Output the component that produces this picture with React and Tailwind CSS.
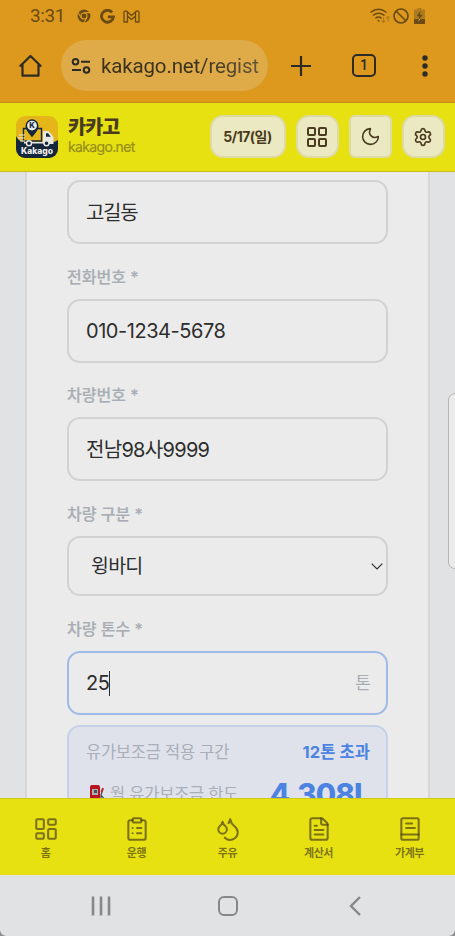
import { ClipboardList, Droplets, FileText, LayoutDashboard, LayoutGrid, Moon, Settings } from 'lucide-react'

const FIELDS = [
  { label: '전화번호 *', value: '010-1234-5678' },
  { label: '차량번호 *', value: '전남98사9999' },
]

const TABS = [
  { label: '홈', icon: LayoutDashboard },
  { label: '운행', icon: ClipboardList },
  { label: '주유', icon: Droplets },
  { label: '계산서', icon: FileText },
  { label: '가계부', icon: LedgerIcon },
]

function LedgerIcon({ size = 24, strokeWidth = 2 }) {
  return (
    <svg width={size} height={size} viewBox="0 0 24 24" fill="none" stroke="currentColor" strokeWidth={strokeWidth} strokeLinecap="round" strokeLinejoin="round">
      <rect x="4" y="2" width="16" height="20" rx="1.500" />
      <path d="M4 17h16M8.500 7H14M8.500 11h8" />
    </svg>
  )
}

function Logo() {
  return (
    <svg className="size-[42px] shrink-0" viewBox="0 0 42 42">
      <defs>
        <clipPath id="logo">
          <rect width="42" height="42" rx="9" />
        </clipPath>
      </defs>
      <g clipPath="url(#logo)">
        <rect width="42" height="42" fill="#e5b619" />
        <path d="M0 20q3 6 9 6h27q4 0 6-2v18H0Z" fill="#14263b" />
        <path d="M7.500 12.500h18v12.500h-18Z" fill="#e5b619" stroke="#14263b" strokeWidth="1.400" />
        <path d="M27 15h5.500l5 6v7H27Z" fill="#e8e8e3" />
        <path d="M30 17.200h2l2.800 3.600H30Z" fill="#14263b" />
        <path d="M3 19h6M2 22h7M4 25h5" stroke="#e8e8e3" strokeWidth="1.200" />
        <path d="M8 26.800h29" stroke="#e8e8e3" strokeWidth="1.600" />
        <path d="M16 21.500c-3-4.500-6.500-7-6.500-11.700a6.500 6.500 0 0 1 13 0c0 4.700-3.500 7.200-6.500 11.700Z" fill="#14263b" />
        <circle cx="16" cy="9.600" r="4.900" fill="#e8e8e3" />
        <circle cx="13" cy="27.300" r="2.500" fill="#14263b" stroke="#e8e8e3" strokeWidth="1.400" />
        <circle cx="30.500" cy="27.300" r="2.500" fill="#14263b" stroke="#e8e8e3" strokeWidth="1.400" />
        <text x="16" y="12.300" fontSize="7.500" fontWeight="800" textAnchor="middle" fill="#14263b">K</text>
        <text x="21" y="38" fontSize="8.500" fontWeight="800" textAnchor="middle" textLength="32" fill="#ededed">Kakago</text>
      </g>
    </svg>
  )
}

function StatusBar() {
  return (
    <div className="flex h-8 items-center pl-[30px] pr-[30px] text-[#6b4b14]">
      <span className="w-[47px] font-['Roboto',sans-serif] text-[19px] tracking-[-0.4px]">3:31</span>
      <svg className="size-[14px]" viewBox="0 0 24 24" fill="currentColor">
        <circle cx="12" cy="12" r="11" />
        <circle cx="12" cy="12" r="5.200" fill="none" stroke="#dd991d" strokeWidth="2" />
        <path d="M12 6.200h11M7 15 1.800 6M17 15l-5.500 9" stroke="#dd991d" strokeWidth="1.800" />
      </svg>
      <svg className="ml-[9px] size-[15px]" viewBox="0 0 24 24" fill="none" stroke="currentColor" strokeWidth="4.500">
        <path d="M19.500 5.500A9.600 9.600 0 1 0 21.600 12.500H12.500" />
      </svg>
      <svg className="ml-[8px] h-[13px] w-[17px]" viewBox="0 0 34 26" fill="none" stroke="currentColor" strokeWidth="2.600" strokeLinejoin="round">
        <path d="M2 24V4q3-4 6-1l9 8 9-8q3-3 6 1v20h-7V12l-8 7-8-7v12Z" />
        <path d="M9 3v9M25 3v9" />
      </svg>
      <svg className="ml-auto h-4 w-5" viewBox="0 0 20 16" fill="none" stroke="currentColor" strokeWidth="1.500">
        <path d="M.5 4.500q8-6.500 16 0M3 7.500q5.500-4.500 11.500 0M5.500 10.300q3-2.500 6 0" />
        <circle cx="8.500" cy="12.700" r="1" fill="currentColor" stroke="none" />
        <path d="M13.500 9.500v5m-1.800-1.800 1.800 1.800 1.800-1.800M18 13.500v-5m-1.700 1.700L18 8.500l1.700 1.700" stroke="#ae7b1d" strokeWidth="1.200" />
      </svg>
      <svg className="ml-[3px] size-4" viewBox="0 0 16 16" fill="none" stroke="currentColor" strokeWidth="1.700">
        <circle cx="8" cy="8" r="7" />
        <path d="m3 3 10 10" />
      </svg>
      <svg className="ml-[5px] h-4 w-[11px]" viewBox="0 0 11 16" fill="currentColor">
        <path d="M3.500 0h4v1.500H11V11H0V1.500h3.500Z" fill="#ae7b1d" />
        <path d="M0 11h11v5H0ZM6.500 3 2.500 8.300h2.700L4.500 12l4.300-5.200H6Z" />
        <path d="m5 11-.7 2.500L6.500 11Z" fill="#d9b878" />
      </svg>
    </div>
  )
}

function BrowserBar() {
  return (
    <div className="flex h-[67px] items-center px-[18px] text-[#2d2b27]">
      <svg className="h-[24px] w-[25px]" viewBox="0 0 25 24" fill="none" stroke="currentColor" strokeWidth="2.200" strokeLinejoin="round">
        <path d="M1.800 12.500 12.500 2l10.700 10.500M4.500 10.500v11.200h16V10.500" />
      </svg>
      <div className="ml-[18px] flex h-[51px] w-[207px] items-center rounded-full bg-[#dfaa48] pl-[10px]">
        <svg className="size-5 shrink-0" viewBox="0 0 20 20" fill="none" stroke="currentColor" strokeWidth="2">
          <circle cx="4.500" cy="5.700" r="2.800" />
          <circle cx="15.500" cy="14" r="2.800" />
          <path d="M10 5.700h9M1 14h9" />
        </svg>
        <span className="ml-[10px] whitespace-nowrap bg-gradient-to-r from-[#39321f] from-60% to-[#67573a] bg-clip-text font-['Roboto',sans-serif] text-[20.500px] leading-7 tracking-[-0.150px] text-transparent">
          kakago.net/regist
        </span>
      </div>
      <svg className="ml-[22px] size-[22px]" viewBox="0 0 22 22" stroke="currentColor" strokeWidth="2.200">
        <path d="M11 1v20M1 11h20" />
      </svg>
      <div className="ml-[40px] flex h-[23px] w-[24px] items-center justify-center rounded-[5px] border-2 border-[#2d2b27] font-['Roboto',sans-serif] text-[14px] font-medium">1</div>
      <svg className="ml-auto mr-[9px] h-[22px] w-[6px]" viewBox="0 0 6 22" fill="currentColor">
        <circle cx="3" cy="3" r="2.700" />
        <circle cx="3" cy="11" r="2.700" />
        <circle cx="3" cy="19" r="2.700" />
      </svg>
    </div>
  )
}

function Header() {
  const button = 'flex h-[43px] items-center justify-center border-2 border-[#dedaa6] bg-[#ebe9c1]'
  return (
    <header className="flex h-[69px] shrink-0 items-center border-b border-[#c9bd17] bg-[#e7e112] pb-px pl-4 pr-[10.500px] text-[#493a20]">
      <Logo />
      <div className="ml-[10px] flex flex-col">
        <span className="text-[19.500px] font-extrabold leading-[21px] tracking-[-0.8px]">카카고</span>
        <span className="text-[14px] leading-[18px] tracking-[-0.650px] text-[#978e1b] [-webkit-text-stroke:0.200px]">kakago.net</span>
      </div>
      <div className="ml-auto flex gap-[10px]">
        <div className={`${button} w-[76px] rounded-[13px] text-[14px] font-bold tracking-[-0.500px]`}>5/17(일)</div>
        <div className={`${button} w-[43px] rounded-[13px]`}><LayoutGrid size={24} strokeWidth={2} /></div>
        <div className={`${button} w-[43px] rounded-[6px]`}><Moon size={21} strokeWidth={1.800} /></div>
        <div className={`${button} w-[43px] rounded-[13px]`}><Settings size={20} strokeWidth={2} /></div>
      </div>
    </header>
  )
}

function Label({ children }) {
  return (
    <div className="flex h-[54.500px] items-center pt-[11px] text-[16px] font-medium tracking-normal text-[#a9aeb4] [-webkit-text-stroke:0.200px]">
      {children}
    </div>
  )
}

function Input({ children, focused }) {
  return (
    <div className={`flex h-[64px] items-center rounded-[13px] border-2 px-[17px] pt-px text-[20px] tracking-[-0.500px] text-[#2d2d2d] ${focused ? 'border-[#9fbae6]' : 'border-[#d2d2d2]'}`}>
      {children}
    </div>
  )
}

export default function App() {
  return (
    <div className="relative flex h-[936px] w-[455px] flex-col overflow-hidden bg-[#e1e2e4] font-['Inter','Noto_Sans_CJK_KR',sans-serif]">
      <div className="h-[103px] shrink-0 border-b border-[#c98d1e] bg-[#dd991d]">
        <StatusBar />
        <BrowserBar />
      </div>
      <Header />

      <main className="h-[626px] shrink-0 overflow-hidden px-[25px]">
        <div className="h-full w-[405px] border-x-2 border-[#d5d7d7] bg-[#ebebeb] px-[40px] pt-[8px]">
          <Input><span className="tracking-[-1.300px]">고길동</span></Input>
          {FIELDS.map(f => (
            <div key={f.label}>
              <Label>{f.label}</Label>
              <Input><span className={f.value.startsWith('0') ? 'tracking-[-0.450px]' : 'tracking-[-0.700px]'}>{f.value}</span></Input>
            </div>
          ))}

          <Label>차량 구분 *</Label>
          <div className="flex h-[60.500px] items-center justify-between rounded-[13px] border-2 border-[#d2d2d2] pl-[22px] pr-[3px] pt-[2px] text-[19.500px] tracking-[-0.800px] text-[#2d2d2d]">
            윙바디
            <svg className="h-[7px] w-[12px]" viewBox="0 0 12 7" fill="none" stroke="currentColor" strokeWidth="1.100">
              <path d="m.7.700 5.300 5.300L11.300.700" />
            </svg>
          </div>

          <Label>차량 톤수 *</Label>
          <Input focused>
            25<span className="h-[25px] w-px bg-[#2d2d2d]" />
            <span className="-mr-[2px] ml-auto pt-px text-[17px] tracking-normal text-[#a9aeb4]">톤</span>
          </Input>

          {/* 유가보조금 */}
          <div className="mt-[10px] h-[120px] rounded-[13px] border-2 border-[#c4d1e7] bg-[#dfe2eb] px-[17px] pt-[11px] tracking-[-0.250px] text-[#a9aeb9]">
            <div className="flex h-7 items-center justify-between pt-px text-[16.500px]">
              <span>유가보조금 적용 구간</span>
              <span className="-mr-px font-bold tracking-[0.100px] text-[#4c83e2]">12톤 초과</span>
            </div>
            <div className="mt-[7px] flex h-11 items-center justify-between text-[16.500px]">
              <span className="flex items-center">
                <svg className="ml-[3px] mr-[4px] h-[22px] w-[17px]" viewBox="0 0 17 22">
                  <path d="M1 3q0-2 2-2h6q2 0 2 2v19H1Z" fill="#b51420" />
                  <path d="M3 5h6v6H3Z" fill="#a9b1b7" />
                  <path d="M5 6h3v3H5Z" fill="#4e4f52" />
                  <path d="m14 5-2 6 4 5v3M12 11v8" fill="none" stroke="#414347" strokeWidth="1.200" />
                  <path d="m12.500 8 1.500-4" stroke="#c02831" strokeWidth="2" />
                </svg>
                월 유가보조금 한도
              </span>
              <span className="-mr-px text-[29.500px] font-extrabold tracking-[-0.800px] text-[#4c83e2]">4,308L</span>
            </div>
          </div>
        </div>
      </main>

      <nav className="grid h-[77px] shrink-0 grid-cols-5 border-t border-[#cfca18] bg-[#e7e112] text-[#4e4118]/70">
        {TABS.map(({ label, icon: Icon }) => (
          <div key={label} className="flex flex-col items-center pt-[17px] text-[11px] font-semibold leading-[18px] tracking-[-0.400px]">
            <Icon size={26} strokeWidth={1.900} />
            <span className="mt-[2px]">{label}</span>
          </div>
        ))}
      </nav>

      <div className="flex h-[61px] shrink-0 items-center pl-[91px] pr-[94px] text-[#868789]">
        <svg className="h-[20px] w-[20px]" viewBox="0 0 20 20" stroke="currentColor" strokeWidth="2.600">
          <path d="M2 .500v19M10 .500v19M18 .500v19" />
        </svg>
        <div className="ml-[107px] size-[20px] rounded-[6px] border-[2.500px] border-[#868789]" />
        <svg className="ml-auto h-[20px] w-[12px]" viewBox="0 0 12 20" fill="none" stroke="currentColor" strokeWidth="2.400">
          <path d="m11 1-9 9 9 9" />
        </svg>
      </div>

      {/* 엣지 패널 핸들 */}
      <div className="absolute left-[448px] top-[393px] h-[176px] w-[14px] rounded-[7px] border border-[#b3b4b5] bg-[#ebebeb]" />

      {/* 화면 모서리 */}
      <svg className="absolute bottom-0 left-0 size-[6px]" viewBox="0 0 6 6">
        <path d="M0 0q.500 5 6 6H0Z" fill="#8d8e90" />
      </svg>
      <svg className="absolute bottom-0 right-0 size-[6px]" viewBox="0 0 6 6">
        <path d="M6 0q-.500 5-6 6h6Z" fill="#8d8e90" />
      </svg>
    </div>
  )
}
